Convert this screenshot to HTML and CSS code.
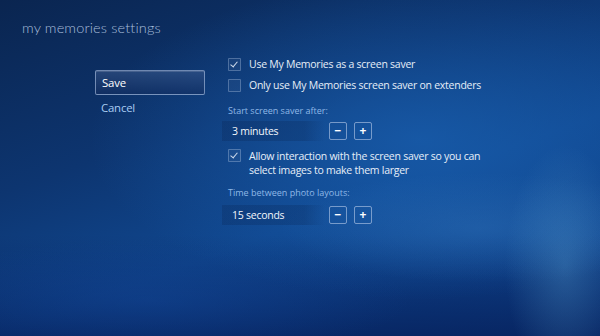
FILE: index.html
```html
<!DOCTYPE html>
<html lang="en">
<head>
    <meta charset="UTF-8">
    <meta name="viewport" content="width=device-width, initial-scale=1.0">
    <title>my memories settings</title>
    <link rel="stylesheet" href="styles.css">
</head>
<body>
    <div id="tela">
        <h1 class="titulo">my memories settings</h1>

        <div class="conteudo">
            <div class="menu">
                <div class="menu__item ativo">Save</div>
                <div class="menu__item">Cancel</div>
            </div>

            <div class="opcoes">
                <div class="check">
                    <span class="check__box marcado"></span>
                    <span class="check__txt">Use My Memories as a screen saver</span>
                </div>
                <div class="check">
                    <span class="check__box"></span>
                    <span class="check__txt">Only use My Memories screen saver on extenders</span>
                </div>

                <div class="rotulo">Start screen saver after:</div>
                <div class="campo">
                    <span class="campo__valor">3 minutes</span>
                    <span class="btn">&minus;</span>
                    <span class="btn">+</span>
                </div>

                <div class="check dupla">
                    <span class="check__box marcado"></span>
                    <span class="check__txt">Allow interaction with the screen saver so you can<br>select images to make them larger</span>
                </div>

                <div class="rotulo r2">Time between photo layouts:</div>
                <div class="campo">
                    <span class="campo__valor">15 seconds</span>
                    <span class="btn">&minus;</span>
                    <span class="btn">+</span>
                </div>
            </div>
        </div>
    </div>
</body>
</html>
```

FILE: styles.css
```css
body{
    margin: 0;
    font-family: "Open Sans", "Noto Sans", sans-serif;
}

#tela{
    width: 600px;
    height: 336px;
    overflow: hidden;
    box-sizing: border-box;
    padding: 18px 0 0 22px;
    background:
        radial-gradient(ellipse 60px 120px at 565px 265px, rgba(90,160,210,0.35), rgba(90,160,210,0) 100%),
        radial-gradient(ellipse 200px 55px at 480px 228px, rgba(60,130,200,0.3), rgba(60,130,200,0) 100%),
        radial-gradient(ellipse 330px 160px at 420px 140px, rgba(25,95,175,0.75), rgba(25,95,175,0) 100%),
        radial-gradient(ellipse 260px 60px at 150px 300px, rgba(20,75,160,0.4), rgba(20,75,160,0) 100%),
        linear-gradient(to bottom, rgba(5,25,70,0) 70%, rgba(5,28,85,0.7) 100%),
        linear-gradient(160deg, #0a2550 0%, #0d3570 35%, #10478f 60%, #0d3d85 100%);
    color: #e6eef8;
}

.titulo{
    margin: 0;
    font-family: Lato, "Open Sans", sans-serif;
    font-size: 14.5px;
    font-weight: 300;
    line-height: 20px;
    color: #a6bcd9;
    letter-spacing: 0.15px;
}

.conteudo{
    display: flex;
    align-items: flex-start;
    margin-top: 16px;
}

.menu{
    margin-left: 73px;
    width: 110px;
    padding-top: 16px;
}

.menu__item{
    height: 25px;
    line-height: 25px;
    padding-left: 6px;
    font-size: 11.4px;
    letter-spacing: -0.2px;
    color: #a9ccf2;
    box-sizing: border-box;
}

.menu__item.ativo{
    color: #ffffff;
    border: 1px solid rgba(190,210,240,0.55);
    border-radius: 2px;
    line-height: 23px;
    background: linear-gradient(to bottom, rgba(60,90,140,0.55), rgba(20,45,95,0.55));
    box-shadow: inset 0 1px 0 rgba(255,255,255,0.15);
}

.opcoes{
    margin-left: 17px;
    width: 300px;
}

.check{
    display: flex;
    align-items: flex-start;
    padding-left: 6px;
    height: 21px;
    font-size: 10.5px;
    letter-spacing: -0.25px;
    line-height: 21px;
}

.check__box{
    width: 11px;
    height: 11px;
    margin-top: 4px;
    margin-right: 8px;
    border: 1px solid rgba(180,200,230,0.35);
    background: rgba(255,255,255,0.04);
    border-radius: 1px;
    position: relative;
    flex: none;
}

.check__box.marcado::after{
    content: "";
    position: absolute;
    left: 3px;
    top: 1px;
    width: 3px;
    height: 6px;
    border: solid #d0dcec;
    border-width: 0 1.5px 1.5px 0;
    transform: rotate(40deg);
}

.check.dupla{
    height: auto;
    line-height: 14px;
    margin-top: 8px;
}

.check.dupla .check__box{
    margin-top: 0;
}

.rotulo{
    margin-top: 8px;
    padding-left: 6px;
    font-size: 9px;
    line-height: 14px;
    color: #8fb8e6;
}

.rotulo.r2{
    margin-top: 9px;
}

.campo{
    display: flex;
    align-items: center;
    height: 20px;
    margin-top: 3px;
}

.r2 + .campo{
    margin-top: 5px;
}

.campo__valor{
    width: 93px;
    height: 20px;
    line-height: 20px;
    padding-left: 10px;
    font-size: 10.5px;
    letter-spacing: -0.25px;
    color: #f2f6fb;
    background: linear-gradient(to right, rgba(5,25,65,0.2) 80%, rgba(5,25,65,0));
}

.btn{
    width: 16px;
    height: 16px;
    margin-left: 7px;
    border: 1px solid rgba(200,215,240,0.55);
    border-radius: 2px;
    line-height: 15px;
    text-align: center;
    font-size: 12px;
    font-weight: 700;
    color: #ffffff;
}

.campo__valor + .btn{
    margin-left: 4px;
}
```
